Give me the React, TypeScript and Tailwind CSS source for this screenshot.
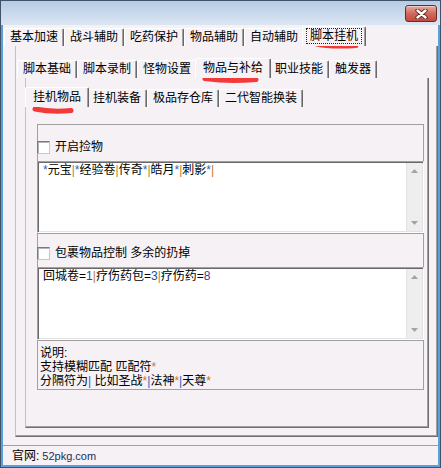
import type { ReactNode } from "react";

const PANEL_BG = "bg-[#f5f1f5]";

interface TabProps {
  label: string
  w: string
  selected?: boolean
  focus?: boolean
}

function Tab({ label, w, selected, focus }: TabProps) {
  if (selected) {
    return (
      <div
        className={`${w} ${PANEL_BG} relative z-10 -mx-[2px] h-[20px] shrink-0 flex justify-center pt-[2px] border-t border-l border-r border-t-white border-l-white border-r-[#696969] shadow-[inset_-1px_0_0_#a0a0a0] rounded-t-[2px] whitespace-nowrap`}
      >
        {focus ? (
          <span className="-mt-[1px] h-[16px] px-[3px] leading-[14px] border border-dotted border-[#222]">{label}</span>
        ) : (
          <span className="leading-[15px]">{label}</span>
        )}
      </div>
    )
  }
  return (
    <div
      className={`${w} h-[18px] shrink-0 flex justify-center pt-[1px] border-t border-l border-r border-t-white border-l-white border-r-[#696969] shadow-[inset_-1px_0_0_#a0a0a0] rounded-t-[2px] whitespace-nowrap`}
    >
      <span className="leading-[15px]">{label}</span>
    </div>
  )
}

function CloseButton() {
  return (
    <div className="w-[32px] h-[17px] rounded-[3px] border border-[#6b2b25] bg-linear-to-b from-[#e8aa9f] via-[#d06a5d] to-[#c24a3c] shadow-[inset_0_1px_0_rgba(255,255,255,0.45)] flex items-center justify-center">
      <svg width="13" height="10" viewBox="0 0 13 10">
        <path d="M2.5 1.5 L10.5 8.5 M10.5 1.5 L2.5 8.5" stroke="#5a1e18" strokeWidth="4.2" strokeLinecap="round" />
        <path d="M2.5 1.5 L10.5 8.5 M10.5 1.5 L2.5 8.5" stroke="#ffffff" strokeWidth="2.4" strokeLinecap="round" />
      </svg>
    </div>
  )
}

function CheckBox({ label }: { label: string }) {
  return (
    <div className="flex items-center h-[13px] -ml-[1px]">
      <div className="w-[13px] h-[13px] shrink-0 bg-white border border-t-[#7a7a7a] border-l-[#7a7a7a] border-r-[#c8c8c8] border-b-[#c8c8c8] shadow-[inset_1px_1px_0_#b4b4b4]" />
      <span className="ml-[5px] leading-[13px] whitespace-nowrap">{label}</span>
    </div>
  )
}

function ScrollBar() {
  return (
    <div className="w-[16px] shrink-0 flex flex-col justify-between bg-[#eeeeee] border-l border-[#e2e2e2]">
      <div className="h-[16px] flex items-center justify-center">
        <svg width="7" height="4" viewBox="0 0 7 4">
          <path d="M0 4 L3.5 0 L7 4Z" fill="#a3a3a3" />
        </svg>
      </div>
      <div className="h-[16px] flex items-center justify-center">
        <svg width="7" height="4" viewBox="0 0 7 4">
          <path d="M0 0 L3.5 4 L7 0Z" fill="#a3a3a3" />
        </svg>
      </div>
    </div>
  )
}

function Memo({ h, children }: { h: string; children: ReactNode }) {
  return (
    <div
      className={`${h} p-[1px] flex bg-white border border-t-[#a0a0a0] border-l-[#a0a0a0] border-r-white border-b-white shadow-[inset_1px_1px_0_#696969,inset_-1px_-1px_0_#e3e3e3]`}
    >
      <div className="flex-1 pl-[4px] leading-[14px] whitespace-nowrap">{children}</div>
      <ScrollBar />
    </div>
  )
}

// 给 * | 数字 上色，模拟截图里的字体边缘颜色
function Rich({ text, star, bar, digit }: { text: string; star: string; bar: string; digit?: string }) {
  return (
    <>
      {[...text].map((c, i) => {
        if (c === "*") return <span key={i} className={star}>*</span>
        if (c === "|") return <span key={i} className={bar}>|</span>
        if (digit && /[0-9]/.test(c)) return <span key={i} className={digit}>{c}</span>
        return <span key={i}>{c}</span>
      })}
    </>
  )
}

export default function App() {
  return (
    <div className="relative w-[441px] h-[468px] flex flex-col border border-[#3f5266] text-[12px] text-black [font-family:'Liberation_Sans','Noto_Sans_CJK_SC',sans-serif] overflow-hidden select-none">
      <div className="h-[24px] shrink-0 flex justify-end pt-[4px] pr-[3px] bg-linear-to-b from-[#b6cbe4] to-[#dbe6f3]">
        <CloseButton />
      </div>

      <div className={`flex-1 flex flex-col border-x-2 border-b-2 border-[#5b9fdb] ${PANEL_BG}`}>
        <div className="h-[21px] shrink-0 flex items-end pl-[1px]">
          <Tab label="基本加速" w="w-[60px]" />
          <Tab label="战斗辅助" w="w-[60px]" />
          <Tab label="吃药保护" w="w-[60px]" />
          <Tab label="物品辅助" w="w-[60px]" />
          <Tab label="自动辅助" w="w-[60px]" />
          <Tab label="脚本挂机" w="w-[64px]" selected focus />
        </div>

        <div className="ml-[12px] h-[391px] shrink-0 flex flex-col border-l border-r border-b border-l-[#c4c0c4] border-r-[#6f6f6f] border-b-[#6f6f6f] shadow-[inset_-1px_-1px_0_#a0a0a0]">
          <div className="h-[32px] shrink-0 flex items-end pl-[1px]">
            <Tab label="脚本基础" w="w-[60px]" />
            <Tab label="脚本录制" w="w-[60px]" />
            <Tab label="怪物设置" w="w-[60px]" />
            <Tab label="物品与补给" w="w-[76px]" selected />
            <Tab label="职业技能" w="w-[60px]" />
            <Tab label="触发器" w="w-[48px]" />
          </div>

          <div className="ml-[9px] mr-[8px] h-[350px] shrink-0 flex flex-col border-l border-r border-b border-l-[#c4c0c4] border-r-[#6f6f6f] border-b-[#6f6f6f] shadow-[inset_-1px_-1px_0_#a0a0a0]">
            <div className="h-[29px] shrink-0 flex items-end pl-[1px]">
              <Tab label="挂机物品" w="w-[64px]" selected />
              <Tab label="挂机装备" w="w-[60px]" />
              <Tab label="极品存仓库" w="w-[72px]" />
              <Tab label="二代智能换装" w="w-[84px]" />
            </div>

            <div className="ml-[11px] mr-[4px] mt-[17px] flex flex-col">
              <div className="h-[37px] pt-[16px] border-t border-x border-[#a0a0a0]">
                <CheckBox label="开启捡物" />
              </div>
              <Memo h="h-[72px]">
                <Rich text="*元宝|*经验卷|传奇*|皓月*|刺影*|" star="text-[#2f63c4]" bar="text-[#c07a2c]" />
              </Memo>
              <div className="h-[34px] pt-[13px] border-t border-x border-[#a0a0a0]">
                <CheckBox label="包裹物品控制 多余的扔掉" />
              </div>
              <Memo h="h-[73px]">
                <Rich text="回城卷=1|疗伤药包=3|疗伤药=8" star="text-[#2f63c4]" bar="text-[#c07a2c]" digit="text-[#1f4a9a]" />
              </Memo>
              <div className="h-[50px] pt-[5px] pl-[2px] border border-[#a0a0a0] leading-[14px] whitespace-nowrap">
                <div>说明:</div>
                <div>
                  <Rich text="支持模糊匹配 匹配符*" star="text-[#c07a2c]" bar="text-[#2f63c4]" />
                </div>
                <div>
                  <Rich text="分隔符为| 比如圣战*|法神*|天尊*" star="text-[#c07a2c]" bar="text-[#2f63c4]" />
                </div>
              </div>
            </div>
          </div>
        </div>

        <div className="mt-[8px] h-[20px] shrink-0 flex items-center pl-[9px] border-t border-[#a0a0a0] leading-[16px] whitespace-nowrap">
          <span>官网: </span>
          <span className="ml-[3px] text-[11px] text-[#1c2f5a]">52pkg.com</span>
        </div>
      </div>

      <svg className="absolute left-[-1px] top-[-1px] pointer-events-none" width="441" height="468" viewBox="0 0 441 468">
        <path d="M315 43.5 C 327 46.5, 341 46.5, 356 45.5" stroke="#f23a3a" strokeWidth="5" strokeLinecap="round" fill="none" />
        <path d="M205 78.5 C 221 80.8, 240 80.8, 256 79.5" stroke="#f23a3a" strokeWidth="5" strokeLinecap="round" fill="none" />
        <path d="M35 109 C 46 111.2, 60 111.5, 71 110.5" stroke="#f23a3a" strokeWidth="5" strokeLinecap="round" fill="none" />
      </svg>
    </div>
  )
}
